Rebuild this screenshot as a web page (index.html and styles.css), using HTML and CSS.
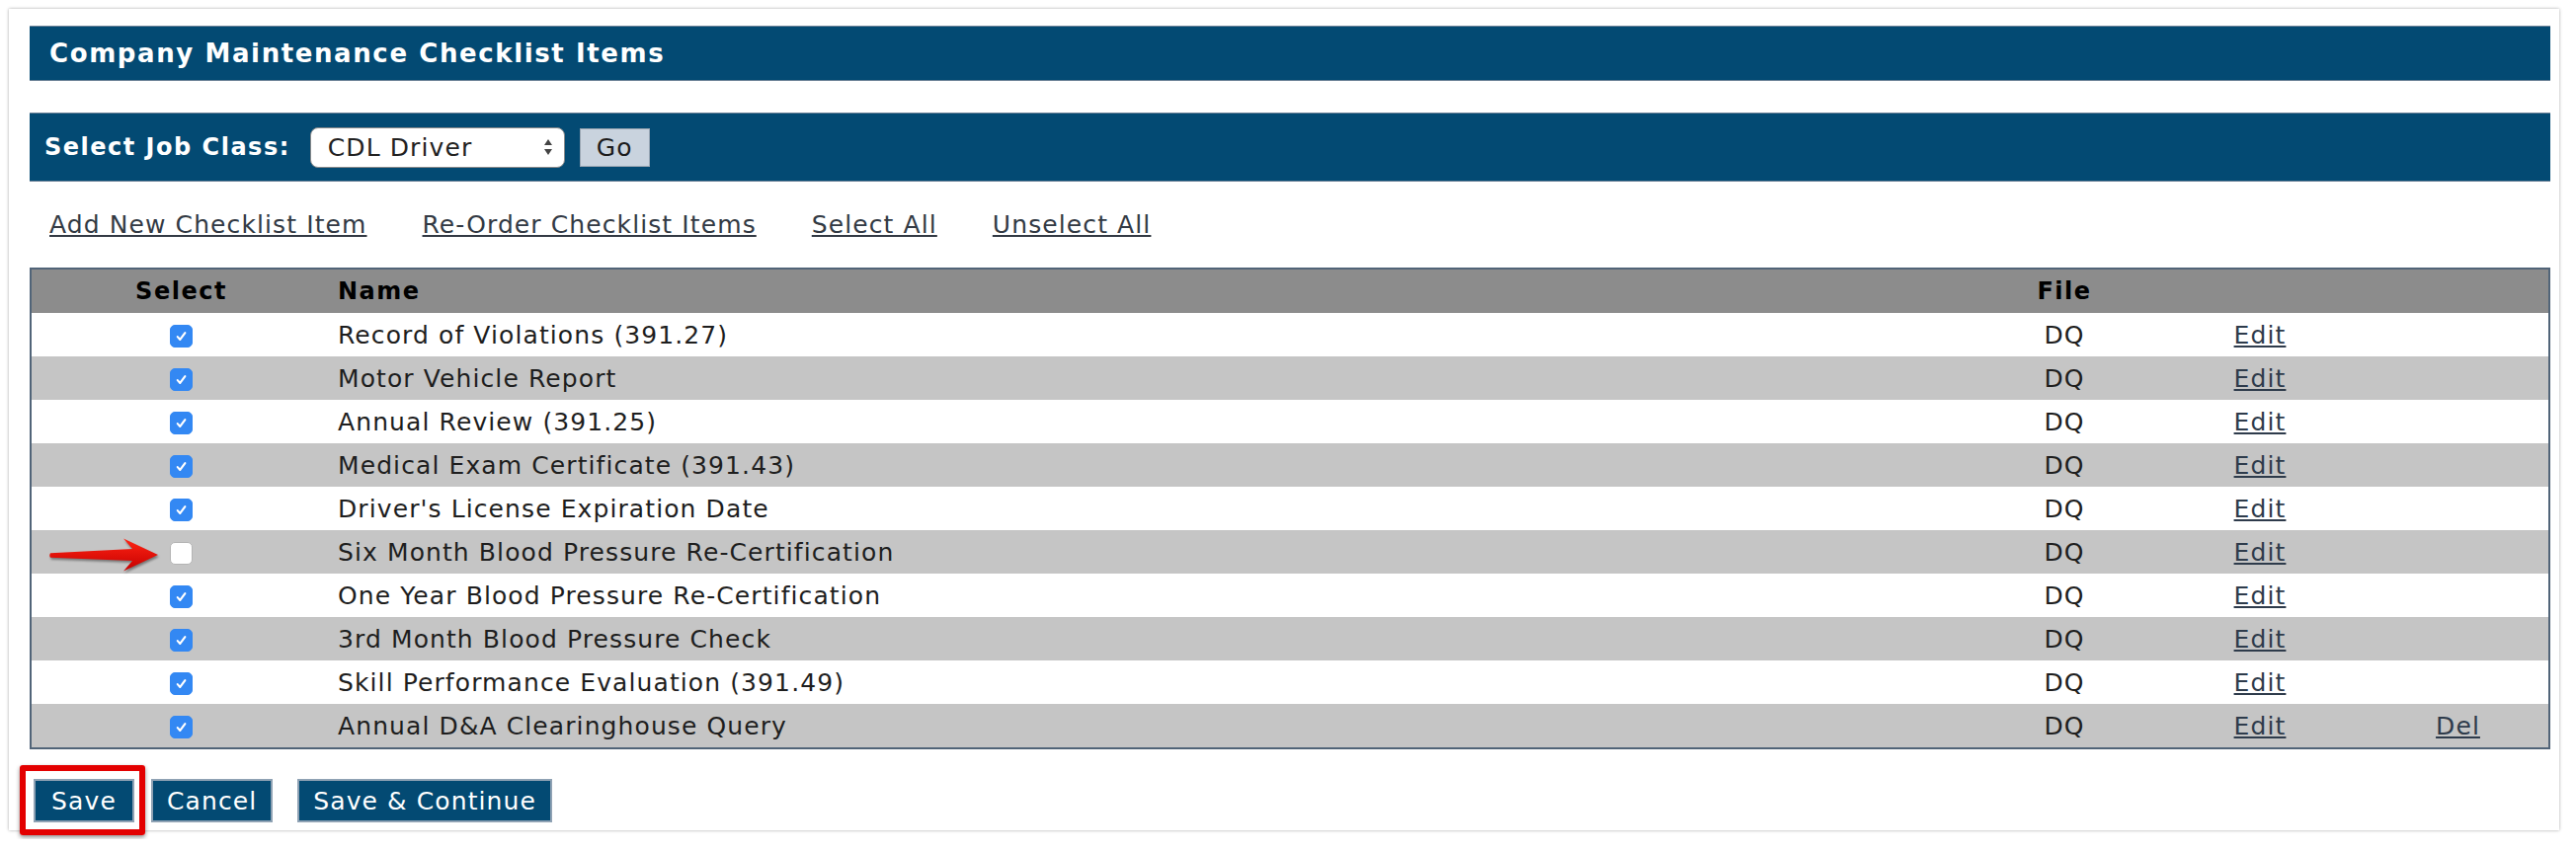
FILE: index.html
```html
<!DOCTYPE html>
<html lang="en">
<head>
  <meta charset="UTF-8">
  <title>Company Maintenance Checklist Items</title>
  <link rel="stylesheet" href="styles.css">
</head>
<body>

<div class="card">
  <div class="titlebar">Company Maintenance Checklist Items</div>

  <form class="jobbar">
    <label for="jobclass">Select Job Class:</label>
    <select id="jobclass" class="jobselect">
      <option>CDL Driver</option>
    </select>
    <button type="button" class="gobtn">Go</button>
  </form>

  <div class="links">
    <a href="#">Add New Checklist Item</a>
    <a href="#">Re-Order Checklist Items</a>
    <a href="#">Select All</a>
    <a href="#">Unselect All</a>
  </div>

  <table class="items">
    <colgroup>
      <col class="c-select">
      <col class="c-name">
      <col class="c-file">
      <col class="c-edit">
      <col class="c-del">
    </colgroup>
    <thead>
      <tr>
        <th>Select</th>
        <th class="name">Name</th>
        <th>File</th>
        <th></th>
        <th></th>
      </tr>
    </thead>
    <tbody>
      <tr><td><input type="checkbox" class="chk" checked></td><td class="name">Record of Violations (391.27)</td><td>DQ</td><td><a href="#">Edit</a></td><td></td></tr>
      <tr><td><input type="checkbox" class="chk" checked></td><td class="name">Motor Vehicle Report</td><td>DQ</td><td><a href="#">Edit</a></td><td></td></tr>
      <tr><td><input type="checkbox" class="chk" checked></td><td class="name">Annual Review (391.25)</td><td>DQ</td><td><a href="#">Edit</a></td><td></td></tr>
      <tr><td><input type="checkbox" class="chk" checked></td><td class="name">Medical Exam Certificate (391.43)</td><td>DQ</td><td><a href="#">Edit</a></td><td></td></tr>
      <tr><td><input type="checkbox" class="chk" checked></td><td class="name">Driver's License Expiration Date</td><td>DQ</td><td><a href="#">Edit</a></td><td></td></tr>
      <tr>
        <td class="pointed">
          <svg class="arrow" viewBox="0 0 110 34" width="110" height="34">
            <defs>
              <linearGradient id="arrowfill" x1="0" y1="0" x2="0" y2="1">
                <stop offset="0" stop-color="#ff2414"/>
                <stop offset="1" stop-color="#c40000"/>
              </linearGradient>
            </defs>
            <path d="M1 15.2 L84 11 L75 0.5 L110 17 L75 33.5 L84 23 L1 19.8 Q-0.5 17.5 1 15.2 Z" fill="url(#arrowfill)"/>
          </svg>
          <input type="checkbox" class="chk">
        </td>
        <td class="name">Six Month Blood Pressure Re-Certification</td><td>DQ</td><td><a href="#">Edit</a></td><td></td>
      </tr>
      <tr><td><input type="checkbox" class="chk" checked></td><td class="name">One Year Blood Pressure Re-Certification</td><td>DQ</td><td><a href="#">Edit</a></td><td></td></tr>
      <tr><td><input type="checkbox" class="chk" checked></td><td class="name">3rd Month Blood Pressure Check</td><td>DQ</td><td><a href="#">Edit</a></td><td></td></tr>
      <tr><td><input type="checkbox" class="chk" checked></td><td class="name">Skill Performance Evaluation (391.49)</td><td>DQ</td><td><a href="#">Edit</a></td><td></td></tr>
      <tr><td><input type="checkbox" class="chk" checked></td><td class="name">Annual D&amp;A Clearinghouse Query</td><td>DQ</td><td><a href="#">Edit</a></td><td><a href="#">Del</a></td></tr>
    </tbody>
  </table>

  <div class="actions">
    <span class="marked"><button type="button" class="btn btn-save">Save</button></span>
    <button type="button" class="btn">Cancel</button>
    <button type="button" class="btn btn-long">Save &amp; Continue</button>
  </div>
</div>

</body>
</html>
```

FILE: styles.css
```css
body {
  margin: 0;
  background-color: #fff;
  font-family: "DejaVu Sans", Verdana, sans-serif;
  font-size: 25px;
  letter-spacing: 1.1px;
  color: #1e1e1e;
}
.card {
  margin: 9px 17px 9px 9px;
  padding: 17px 9px 8px 21px;
  background-color: #fff;
  box-shadow: 0 0 3px rgba(0, 0, 0, 0.35);
}
.titlebar {
  height: 54px;
  display: flex;
  align-items: center;
  padding-left: 20px;
  background-color: #034a73;
  border-top: 1px solid #6c8297;
  border-bottom: 1px solid #6c8297;
  color: #fff;
  font-size: 26px;
  font-weight: bold;
  letter-spacing: 1.6px;
}
.jobbar {
  margin: 32px 0 0;
  height: 68px;
  display: flex;
  align-items: center;
  padding-left: 15px;
  background-color: #034a73;
  border-top: 1px solid #6c8297;
  border-bottom: 1px solid #6c8297;
}
.jobbar label {
  color: #fff;
  font-size: 24px;
  font-weight: bold;
  letter-spacing: 1.5px;
  margin-right: 20px;
}
.jobselect {
  appearance: none;
  -webkit-appearance: none;
  width: 258px;
  height: 41px;
  padding: 0 0 0 17px;
  border: 1px solid #8a8a8a;
  border-radius: 8px;
  background: #fff url("data:image/svg+xml,%3Csvg xmlns='http://www.w3.org/2000/svg' width='10' height='20' viewBox='0 0 10 20'%3E%3Cpath d='M1 8 L5 2 L9 8 Z M1 12 L5 18 L9 12 Z' fill='%23444'/%3E%3C/svg%3E") right 11px center no-repeat;
  font-family: inherit;
  font-size: 25px;
  letter-spacing: inherit;
  color: #222;
  margin-right: 15px;
}
.gobtn {
  width: 71px;
  height: 39px;
  padding: 0;
  background-color: #c9d3de;
  border: 1px solid #9aa6b3;
  font-family: inherit;
  font-size: 25px;
  letter-spacing: inherit;
  color: #1c1c1c;
}
.links {
  height: 87px;
  display: flex;
  align-items: center;
  gap: 56px;
  padding-left: 20px;
}
.links a {
  color: #333a44;
}
.items {
  width: 100%;
  table-layout: fixed;
  border-collapse: collapse;
  border: 2px solid #516478;
}
.c-select { width: 304px; }
.c-file { width: 178px; }
.c-edit { width: 218px; }
.c-del { width: 184px; }
.items th,
.items td {
  height: 44px;
  padding: 0;
  text-align: center;
  vertical-align: middle;
  white-space: nowrap;
}
.items th {
  background-color: #8c8c8c;
  color: #000;
  font-size: 24px;
  font-weight: bold;
  letter-spacing: 1.5px;
}
.items .name {
  text-align: left;
  padding-left: 7px;
}
.items tbody tr:nth-child(even) {
  background-color: #c5c5c5;
}
.items a {
  color: #2e3b4b;
}
.chk {
  appearance: none;
  -webkit-appearance: none;
  width: 23px;
  height: 23px;
  margin: 0;
  vertical-align: middle;
  border: 1px solid #b4b4b4;
  border-radius: 5px;
  background-color: #fff;
}
.chk:checked {
  border-color: #3388f3;
  background: #3388f3 url("data:image/svg+xml,%3Csvg xmlns='http://www.w3.org/2000/svg' viewBox='0 0 14 14'%3E%3Cpath d='M3.5 7.6 L5.9 10.2 L10.6 3.8' fill='none' stroke='white' stroke-width='2' stroke-linecap='round' stroke-linejoin='round'/%3E%3C/svg%3E") center / 15px no-repeat;
}
.pointed {
  position: relative;
}
.arrow {
  position: absolute;
  left: 18px;
  top: 8px;
  filter: drop-shadow(1px 2px 1px rgba(0, 0, 0, 0.4));
}
.actions {
  display: flex;
  gap: 17px;
  margin-top: 30px;
  padding-left: 4px;
}
.btn {
  height: 44px;
  padding: 0 14px;
  background-color: #034a73;
  border: 2px solid #8fa2b4;
  color: #fff;
  font-family: inherit;
  font-size: 25px;
  letter-spacing: inherit;
}
.btn-save {
  width: 102px;
  padding: 0;
}
.btn-long {
  margin-left: 8px;
}
.marked {
  position: relative;
  display: flex;
}
/* red highlight frame drawn around the Save button */
.marked::after {
  content: "";
  position: absolute;
  top: -14px;
  left: -14px;
  right: -11px;
  bottom: -13px;
  border: 6px solid #e30000;
  border-radius: 3px;
  box-shadow: 0 2px 4px rgba(0, 0, 0, 0.45);
}
```
